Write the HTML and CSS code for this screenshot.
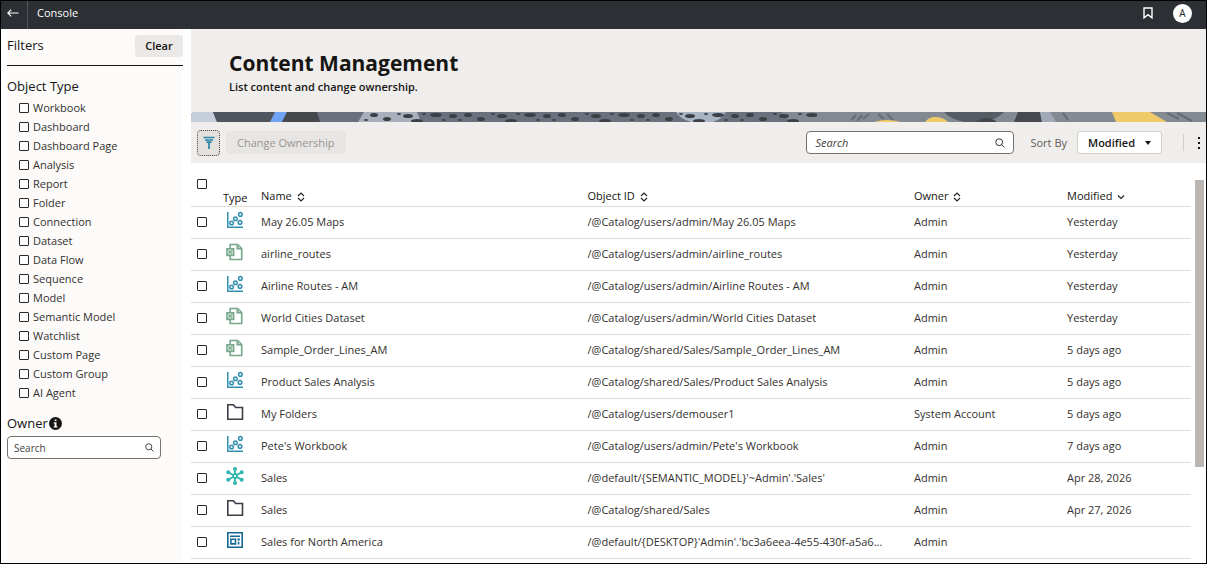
FILE: index.html
```html
<!DOCTYPE html>
<html lang="en">
<head>
    <meta charset="UTF-8">
    <meta name="viewport" content="width=device-width, initial-scale=1.0">
    <title>Console - Content Management</title>
    <link rel="stylesheet" href="styles.css">
</head>
<body>
    <!-- icons shared by the page -->
    <svg class="sprite" aria-hidden="true">
        <symbol id="workbook" viewBox="0 0 18 18">
            <g fill="none" stroke="#2f8fae" stroke-width="1.5">
                <path d="M1.8 1v15.2H17"/>
                <circle cx="5.6" cy="12" r="1.8"/>
                <circle cx="9.4" cy="7.8" r="1.8"/>
                <circle cx="14.4" cy="3.4" r="1.8"/>
                <circle cx="14" cy="11.4" r="1.8"/>
            </g>
        </symbol>
        <symbol id="dataset" viewBox="0 0 18 18">
            <g fill="none" stroke="#74a587" stroke-width="1.6">
                <path d="M4.2 5V1.5h7.3l4.2 4v11H4.2V13"/>
                <path d="M11.3 1.5v4.2h4.2" fill="#b5cfbf"/>
                <rect x="1" y="5.8" width="6.6" height="6.6" fill="#e0ebe4"/>
                <path d="M2.6 7.4l3.4 3.4m0-3.4l-3.4 3.4" stroke-width="1.2"/>
            </g>
        </symbol>
        <symbol id="folder" viewBox="0 0 18 18">
            <path d="M1.8 1.7h5.5l2.4 2.8h6.8v11.8H1.8z" fill="none" stroke="#3c3c46" stroke-width="1.6"/>
        </symbol>
        <symbol id="model" viewBox="0 0 18 18">
            <g fill="none" stroke="#2fb5ad" stroke-width="1.8">
                <path d="M9 3.5v11M3 5.7l12 6.6M3 12.3l12-6.6"/>
                <circle cx="9" cy="9" r="2" fill="#fff"/>
            </g>
            <g fill="#2fb5ad">
                <circle cx="9" cy="2" r="2"/>
                <circle cx="9" cy="16" r="2"/>
                <circle cx="2.3" cy="5.2" r="2"/>
                <circle cx="15.7" cy="5.2" r="2"/>
                <circle cx="2.3" cy="12.8" r="2"/>
                <circle cx="15.7" cy="12.8" r="2"/>
            </g>
        </symbol>
        <symbol id="report" viewBox="0 0 18 18">
            <g fill="none" stroke="#146a91" stroke-width="1.6">
                <path d="M1.8 1.8h14.4v14.4H1.8zM4 5.2h10"/>
                <path d="M4.9 8.3h4.6v4.6H4.9z"/>
                <path d="M11.5 8.2h2.3M12.6 8v1.8m0 1v2.8"/>
            </g>
        </symbol>
        <symbol id="magnifier" viewBox="0 0 10 10">
            <g fill="none" stroke="#333">
                <circle cx="4.2" cy="4.2" r="3.4"/>
                <path d="M6.7 6.7l2.8 2.8"/>
            </g>
        </symbol>
        <symbol id="sort" viewBox="0 0 8 10">
            <path d="M1 4l3-3 3 3M1 6l3 3 3-3" fill="none" stroke="#222" stroke-width="1.2"/>
        </symbol>
        <symbol id="sort-down" viewBox="0 0 8 10">
            <path d="M1 3.5l3 3 3-3" fill="none" stroke="#222" stroke-width="1.2"/>
        </symbol>
    </svg>

    <header class="topbar">
        <button type="button" class="back" aria-label="Back">
            <svg width="12" height="8" viewBox="0 0 12 8"><path d="M4.2.7L.9 4l3.3 3.3M1 4h10.5" fill="none" stroke="#fff" stroke-width="1.2"/></svg>
        </button>
        <span class="app-name">Console</span>
        <button type="button" class="bookmark" aria-label="Bookmarks">
            <svg width="10" height="12" viewBox="0 0 10 12"><path d="M1 1h8v9.8L5 7.6l-4 3.2z" fill="none" stroke="#fff" stroke-width="1.4"/></svg>
        </button>
        <button type="button" class="avatar">A</button>
    </header>

    <div class="layout">
        <aside class="filters">
            <div class="filters-head">
                <h2>Filters</h2>
                <button type="button" class="clear">Clear</button>
            </div>
            <h3>Object Type</h3>
            <div class="types">
                <label><input type="checkbox">Workbook</label>
                <label><input type="checkbox">Dashboard</label>
                <label><input type="checkbox">Dashboard Page</label>
                <label><input type="checkbox">Analysis</label>
                <label><input type="checkbox">Report</label>
                <label><input type="checkbox">Folder</label>
                <label><input type="checkbox">Connection</label>
                <label><input type="checkbox">Dataset</label>
                <label><input type="checkbox">Data Flow</label>
                <label><input type="checkbox">Sequence</label>
                <label><input type="checkbox">Model</label>
                <label><input type="checkbox">Semantic Model</label>
                <label><input type="checkbox">Watchlist</label>
                <label><input type="checkbox">Custom Page</label>
                <label><input type="checkbox">Custom Group</label>
                <label><input type="checkbox">AI Agent</label>
            </div>
            <h3 class="owner-title">
                <label for="ownerSearch">Owner</label>
                <svg width="13" height="13" viewBox="0 0 13 13"><circle cx="6.5" cy="6.5" r="6.5" fill="#161513"/><path d="M5.6 2.4h1.9v1.7H5.6zM4.7 5.3h2.8v3.9h.9v1.2H4.7V9.2h.9V6.5h-.9z" fill="#fff"/></svg>
            </h3>
            <div class="search owner-search">
                <input type="text" id="ownerSearch" placeholder="Search">
                <svg width="9" height="9"><use href="#magnifier"/></svg>
            </div>
        </aside>

        <main class="content">
            <div class="hero">
                <h1>Content Management</h1>
                <p>List content and change ownership.</p>
            </div>
            <svg class="strip" viewBox="0 0 1015 10" preserveAspectRatio="none" aria-hidden="true">
                <defs>
                    <pattern id="spots" width="94" height="10" patternUnits="userSpaceOnUse">
                        <g fill="#3c4046">
                            <ellipse cx="8" cy="7" rx="4" ry="2"/>
                            <ellipse cx="20" cy="2" rx="2" ry="1"/>
                            <ellipse cx="29" cy="4" rx="5" ry="2"/>
                            <ellipse cx="38" cy="9" rx="6" ry="2"/>
                            <ellipse cx="45" cy="2" rx="2" ry="1"/>
                            <ellipse cx="57" cy="3" rx="6" ry="2"/>
                            <ellipse cx="65" cy="8" rx="2" ry="1"/>
                            <ellipse cx="74" cy="4" rx="4" ry="2"/>
                            <ellipse cx="81" cy="8" rx="2" ry="1"/>
                            <ellipse cx="89" cy="3" rx="4" ry="2"/>
                        </g>
                    </pattern>
                </defs>
                <rect width="1015" height="10" fill="#6a717c"/>
                <path d="M0 0h22l4 10H0z" fill="#c6cedb"/>
                <path d="M22 0h62l-4 10H26z" fill="#50555e"/>
                <path d="M84 0h12l-5 10H79z" fill="#71a3f4"/>
                <path d="M96 0h30l3 10H91z" fill="#46494c"/>
                <path d="M173 0h53l4 10h-63z" fill="#a9b0bb"/>
                <path d="M485 0h50q-4 7-13 10h-22q-11-3-15-10z" fill="#a9b4c3"/>
                <path d="M590 0h425v10H600z" fill="#838a92"/>
                <rect x="172" width="454" height="10" fill="url(#spots)"/>
                <path d="M660 8l5-5m1 6l5-6m1 4l6-5M687 2l6 5m3-5l6 6m170-7l5 7m99-7l12 6m-2-6l15 8" stroke="#646b73" stroke-width="2"/>
                <path d="M753 0h60q-8 8-20 10h-20q-14-3-20-10z" fill="#575c64"/>
                <path d="M784 10q12-8 22 0z" fill="#44484d"/>
                <path d="M683 10q12-4 27 0zM734 10q4-5 10-5 8 0 13 5z" fill="#f0ca68"/>
                <path d="M827 0h22l2 10h-28z" fill="#46494e"/>
                <path d="M849 0h10l6 10h-14z" fill="#a0a9b5"/>
                <path d="M921 0h38l17 10h-51z" fill="#f0ca68"/>
            </svg>

            <div class="toolbar">
                <button type="button" class="filter-toggle" aria-label="Filter">
                    <svg width="12" height="14" viewBox="0 0 12 14"><path d="M.5 1.5h11M2 4h8M3.5 6.2h5M6 6v7" fill="none" stroke="#2886a8" stroke-width="1.7"/></svg>
                </button>
                <button type="button" class="change" disabled>Change Ownership</button>
                <div class="search main-search">
                    <input type="text" placeholder="Search" aria-label="Search content">
                    <svg width="10" height="10"><use href="#magnifier"/></svg>
                </div>
                <label class="sort-label" for="sortBy">Sort By</label>
                <div class="sort-select">
                    <select id="sortBy">
                        <option>Modified</option>
                        <option>Name</option>
                    </select>
                    <svg width="6" height="4" viewBox="0 0 6 4"><path d="M0 0h6L3 4z" fill="#161513"/></svg>
                </div>
                <button type="button" class="more" aria-label="More">
                    <svg width="4" height="12" viewBox="0 0 4 12"><path d="M1 0h2v2H1zM1 5h2v2H1zM1 10h2v2H1z" fill="#161513"/></svg>
                </button>
            </div>

            <div class="list">
                <table>
                    <thead>
                        <tr>
                            <th class="col-check"><input type="checkbox" aria-label="Select all"></th>
                            <th class="col-type">Type</th>
                            <th class="col-name">Name <svg width="8" height="10"><use href="#sort"/></svg></th>
                            <th class="col-id">Object ID <svg width="8" height="10"><use href="#sort"/></svg></th>
                            <th class="col-owner">Owner <svg width="8" height="10"><use href="#sort"/></svg></th>
                            <th>Modified <svg width="8" height="10"><use href="#sort-down"/></svg></th>
                        </tr>
                    </thead>
                    <tbody>
                        <tr>
                            <td><input type="checkbox" aria-label="Select May 26.05 Maps"></td>
                            <td><svg class="type"><use href="#workbook"/></svg></td>
                            <td>May 26.05 Maps</td>
                            <td>/@Catalog/users/admin/May 26.05 Maps</td>
                            <td>Admin</td>
                            <td>Yesterday</td>
                        </tr>
                        <tr>
                            <td><input type="checkbox" aria-label="Select airline_routes"></td>
                            <td><svg class="type"><use href="#dataset"/></svg></td>
                            <td>airline_routes</td>
                            <td>/@Catalog/users/admin/airline_routes</td>
                            <td>Admin</td>
                            <td>Yesterday</td>
                        </tr>
                        <tr>
                            <td><input type="checkbox" aria-label="Select Airline Routes - AM"></td>
                            <td><svg class="type"><use href="#workbook"/></svg></td>
                            <td>Airline Routes - AM</td>
                            <td>/@Catalog/users/admin/Airline Routes - AM</td>
                            <td>Admin</td>
                            <td>Yesterday</td>
                        </tr>
                        <tr>
                            <td><input type="checkbox" aria-label="Select World Cities Dataset"></td>
                            <td><svg class="type"><use href="#dataset"/></svg></td>
                            <td>World Cities Dataset</td>
                            <td>/@Catalog/users/admin/World Cities Dataset</td>
                            <td>Admin</td>
                            <td>Yesterday</td>
                        </tr>
                        <tr>
                            <td><input type="checkbox" aria-label="Select Sample_Order_Lines_AM"></td>
                            <td><svg class="type"><use href="#dataset"/></svg></td>
                            <td>Sample_Order_Lines_AM</td>
                            <td>/@Catalog/shared/Sales/Sample_Order_Lines_AM</td>
                            <td>Admin</td>
                            <td>5 days ago</td>
                        </tr>
                        <tr>
                            <td><input type="checkbox" aria-label="Select Product Sales Analysis"></td>
                            <td><svg class="type"><use href="#workbook"/></svg></td>
                            <td>Product Sales Analysis</td>
                            <td>/@Catalog/shared/Sales/Product Sales Analysis</td>
                            <td>Admin</td>
                            <td>5 days ago</td>
                        </tr>
                        <tr>
                            <td><input type="checkbox" aria-label="Select My Folders"></td>
                            <td><svg class="type"><use href="#folder"/></svg></td>
                            <td>My Folders</td>
                            <td>/@Catalog/users/demouser1</td>
                            <td>System Account</td>
                            <td>5 days ago</td>
                        </tr>
                        <tr>
                            <td><input type="checkbox" aria-label="Select Pete's Workbook"></td>
                            <td><svg class="type"><use href="#workbook"/></svg></td>
                            <td>Pete's Workbook</td>
                            <td>/@Catalog/users/admin/Pete's Workbook</td>
                            <td>Admin</td>
                            <td>7 days ago</td>
                        </tr>
                        <tr>
                            <td><input type="checkbox" aria-label="Select Sales model"></td>
                            <td><svg class="type"><use href="#model"/></svg></td>
                            <td>Sales</td>
                            <td>/@default/{SEMANTIC_MODEL}'~Admin'.'Sales'</td>
                            <td>Admin</td>
                            <td>Apr 28, 2026</td>
                        </tr>
                        <tr>
                            <td><input type="checkbox" aria-label="Select Sales folder"></td>
                            <td><svg class="type"><use href="#folder"/></svg></td>
                            <td>Sales</td>
                            <td>/@Catalog/shared/Sales</td>
                            <td>Admin</td>
                            <td>Apr 27, 2026</td>
                        </tr>
                        <tr>
                            <td><input type="checkbox" aria-label="Select Sales for North America"></td>
                            <td><svg class="type"><use href="#report"/></svg></td>
                            <td>Sales for North America</td>
                            <td>/@default/{DESKTOP}'Admin'.'bc3a6eea-4e55-430f-a5a6...</td>
                            <td>Admin</td>
                            <td></td>
                        </tr>
                    </tbody>
                </table>
                <div class="scroll"><div class="thumb"></div></div>
            </div>
        </main>
    </div>
</body>
</html>
```

FILE: styles.css
```css
* {
    box-sizing: border-box;
}

body {
    display: flex;
    flex-direction: column;
    min-height: 100vh;
    margin: 0;
    border: 1px solid #000;
    background-color: #fff;
    font-family: "Open Sans", "Noto Sans", sans-serif;
    font-size: 11px;
    line-height: 16px;
    color: #33302d;
}

h1, h2, h3, p {
    margin: 0;
}

button, input, select {
    font: inherit;
    color: inherit;
}

button {
    padding: 0;
    border: none;
    background: none;
    cursor: pointer;
}

svg {
    flex: none;
}

input[type="checkbox"] {
    appearance: none;
    display: block;
    flex: none;
    width: 10px;
    height: 10px;
    margin: 0;
    border: 1px solid #2a2826;
    border-radius: 1px;
    background-color: #fff;
}

input[type="checkbox"]:checked {
    background-color: #2886a8;
}

.sprite {
    position: absolute;
    width: 0;
    height: 0;
}

/* top bar */
.topbar {
    display: flex;
    align-items: center;
    height: 28px;
    padding-right: 14px;
    padding-bottom: 4px;
    background-color: #2c2f34;
    color: #fff;
}

.back {
    display: flex;
    align-items: center;
    justify-content: center;
    align-self: stretch;
    width: 27px;
    margin-bottom: -4px;
    padding-right: 2px;
    padding-bottom: 4px;
    border-right: 1px solid #50545a;
}

.app-name {
    margin-left: 9px;
}

.bookmark {
    display: flex;
    margin-left: auto;
    margin-right: 20px;
}

.avatar {
    width: 19px;
    height: 19px;
    border-radius: 50%;
    background-color: #fff;
    color: #222;
    font-size: 10px;
    line-height: 19px;
}

.layout {
    display: flex;
    flex: 1;
}

/* filters */
.filters {
    width: 176px;
    margin: 0 8px 0 6px;
    padding-top: 6px;
    background-color: #fcfbfa;
}

.filters-head {
    display: flex;
    align-items: flex-start;
    justify-content: space-between;
    height: 31px;
    margin-bottom: 10px;
    border-bottom: 1px solid #161513;
}

h2, h3 {
    font-size: 13px;
    font-weight: 400;
    line-height: 20px;
    color: #161513;
}

.clear {
    width: 48px;
    height: 22px;
    border-radius: 3px;
    background-color: #ebe9e7;
    font-weight: 600;
    color: #161513;
}

.types {
    padding: 2px 0 0 12px;
}

.types label {
    display: flex;
    align-items: center;
    gap: 4px;
    height: 19px;
}

.owner-title {
    display: flex;
    align-items: center;
    gap: 1px;
    margin-top: 11px;
    margin-bottom: 3px;
}

.search {
    display: flex;
    align-items: center;
    height: 23px;
    padding: 0 6px;
    border: 1px solid #77726d;
    border-radius: 4px;
    background-color: #fff;
}

.search input {
    flex: 1;
    min-width: 0;
    padding: 0;
    border: none;
    outline: none;
    background: none;
}

.search input::placeholder {
    color: #44413e;
    opacity: 1;
}

.owner-search {
    width: 154px;
    font-size: 10px;
}

/* content */
.content {
    display: flex;
    flex: 1;
    flex-direction: column;
    min-width: 0;
}

.hero {
    height: 83px;
    padding: 20px 38px 0;
    background-color: #f0eeec;
    color: #161513;
}

.hero h1 {
    font-size: 21px;
    font-weight: 700;
    line-height: 28px;
}

.hero p {
    margin-top: 2px;
    font-weight: 600;
}

.strip {
    display: block;
    width: 100%;
    height: 10px;
    border-top-left-radius: 4px;
}

.toolbar {
    display: flex;
    align-items: center;
    height: 41px;
    padding: 0 5px 0 6px;
    background-color: #f0eeec;
}

.filter-toggle {
    display: flex;
    align-items: center;
    justify-content: center;
    width: 23px;
    height: 26px;
    border: 1px dotted #444;
    border-radius: 4px;
    background-color: #e3e1dd;
}

.change {
    height: 23px;
    margin-left: 6px;
    padding: 0 11px;
    border-radius: 3px;
    background-color: #e8e6e4;
    font-weight: 500;
    color: #99958f;
}

.main-search {
    width: 208px;
    margin-left: auto;
    padding: 0 8px;
}

.main-search input::placeholder {
    font-style: italic;
}

.sort-label {
    margin-left: 16px;
    color: #5f5b57;
}

.sort-select {
    display: flex;
    align-items: center;
    margin-left: 10px;
}

.sort-select select {
    appearance: none;
    width: 85px;
    height: 23px;
    padding: 0 10px;
    border: 1px solid #d2cfcb;
    border-radius: 3px;
    background-color: #fff;
    font-weight: 600;
    color: #161513;
}

.sort-select svg {
    margin-left: -17px;
    margin-right: 11px;
    pointer-events: none;
}

.more {
    display: flex;
    align-items: center;
    height: 17px;
    margin-left: 21px;
    padding-left: 13px;
    border-left: 1px solid #d2cfcb;
}

/* list */
.list {
    display: flex;
    flex: 1;
    padding-right: 2px;
}

table {
    flex: 1;
    align-self: flex-start;
    min-width: 0;
    margin-top: 10px;
    border-collapse: collapse;
    table-layout: fixed;
}

th, td {
    height: 32px;
    padding: 0;
    border-bottom: 1px solid #dfdddb;
    text-align: left;
    white-space: nowrap;
}

th {
    height: 33px;
    padding-top: 14px;
    font-weight: 400;
    color: #161513;
}

th svg {
    margin-left: 2px;
    vertical-align: -2px;
}

td:first-child, .col-check {
    padding-left: 6px;
}

th.col-check {
    width: 32px;
    padding-top: 6px;
    vertical-align: top;
}

th.col-type {
    width: 38px;
    padding-top: 18px;
    line-height: 14px;
}

.col-name, .col-id {
    width: 32.65%;
}

.col-owner {
    width: 15.3%;
}

.type {
    display: block;
    width: 18px;
    height: 18px;
    margin-left: 3px;
    margin-bottom: 4px;
}

.scroll {
    width: 9px;
    margin-left: 4px;
    padding-top: 17px;
}

.thumb {
    height: 75%;
    background-color: #bbb6b1;
}
```
